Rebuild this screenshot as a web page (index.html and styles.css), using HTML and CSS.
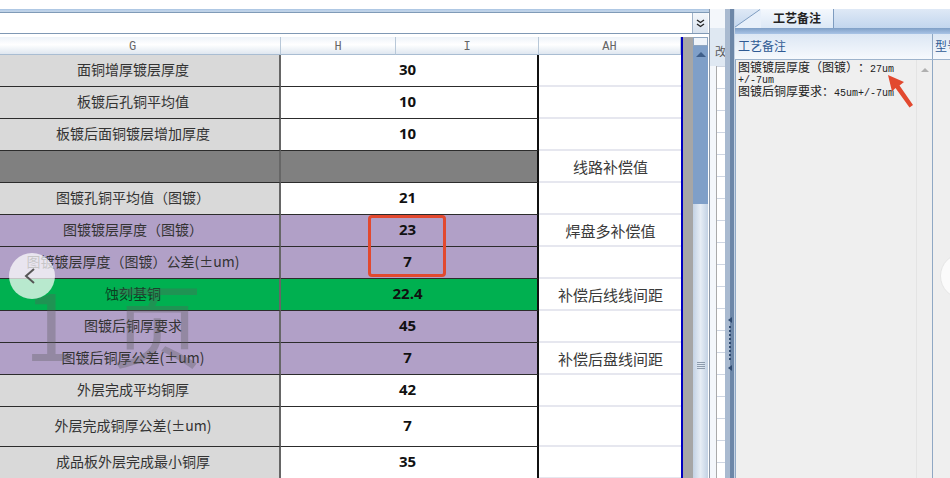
FILE: index.html
```html
<!DOCTYPE html>
<html lang="zh-CN">
<head>
    <meta charset="UTF-8">
    <title>工艺备注</title>
    <link rel="stylesheet" href="styles.css">
</head>
<body>

<div class="app">
    <!-- 左边表格 -->
    <div class="sheet">
        <div class="title-line"></div>
        <div class="formula">
            <div class="formula-input"></div>
            <div class="formula-btn">
                <svg width="9" height="9" viewBox="0 0 9 9"><path d="M1 1l3.5 2.5L8 1M1 5l3.5 2.5L8 5" fill="none" stroke="#222" stroke-width="1.4"/></svg>
            </div>
        </div>
        <div class="sheet-body">
            <div class="table">
                <div class="th">G</div><div class="th">H</div><div class="th">I</div><div class="th">AH</div>

                <div class="td name">面铜增厚镀层厚度</div><div class="td val">30</div><div class="td note"></div>
                <div class="td name">板镀后孔铜平均值</div><div class="td val">10</div><div class="td note"></div>
                <div class="td name">板镀后面铜镀层增加厚度</div><div class="td val">10</div><div class="td note"></div>
                <div class="td name dark"></div><div class="td val dark"></div><div class="td note">线路补偿值</div>
                <div class="td name">图镀孔铜平均值（图镀）</div><div class="td val">21</div><div class="td note"></div>
                <div class="td name purple">图镀镀层厚度（图镀）</div><div class="td val purple">23</div><div class="td note">焊盘多补偿值</div>
                <div class="td name purple">图镀镀层厚度（图镀）公差(±um)</div><div class="td val purple">7</div><div class="td note"></div>
                <div class="td name green">蚀刻基铜</div><div class="td val green">22.4</div><div class="td note">补偿后线线间距</div>
                <div class="td name purple">图镀后铜厚要求</div><div class="td val purple">45</div><div class="td note"></div>
                <div class="td name purple">图镀后铜厚公差(±um)</div><div class="td val purple">7</div><div class="td note">补偿后盘线间距</div>
                <div class="td name">外层完成平均铜厚</div><div class="td val">42</div><div class="td note"></div>
                <div class="td name">外层完成铜厚公差(±um)</div><div class="td val">7</div><div class="td note"></div>
                <div class="td name">成品板外层完成最小铜厚</div><div class="td val">35</div><div class="td note"></div>
            </div>
            <div class="sheet-edge"></div>
            <div class="scrollbar">
                <div class="scroll-split"></div>
                <div class="scroll-track"><span class="scroll-up"></span></div>
                <div class="scroll-thumb"><span class="grip"></span></div>
            </div>
        </div>
    </div>

    <!-- 中间窄列和分隔条 -->
    <div class="narrow">
        <div class="narrow-head">改</div>
        <div class="narrow-rows"></div>
    </div>
    <div class="splitter">
        <span class="split-arrow"></span>
        <span class="split-dots"></span>
        <span class="split-arrow"></span>
    </div>

    <!-- 右边面板 -->
    <div class="panel">
        <div class="tabs">
            <svg class="tab-slant" width="28" height="20" viewBox="0 0 28 20"><path d="M0 20L27 0H28V20Z" fill="#e8f0fa"/><path d="M0 19.500L27 .5" fill="none" stroke="#7e9cc0"/></svg>
            <div class="tab">工艺备注</div>
        </div>
        <div class="panel-band"></div>
        <div class="panel-head">
            <div class="head-main">工艺备注</div>
            <div class="head-next">型号</div>
        </div>
        <div class="panel-body">
            <div class="remark">
                <p>图镀镀层厚度（图镀）：<span class="latin">27um</span></p>
                <p class="latin line-two">+/-7um</p>
                <p>图镀后铜厚要求：<span class="latin">45um+/-7um</span></p>
            </div>
            <div class="remark-scroll"><span class="scroll-up light"></span></div>
            <div class="next-col"></div>
        </div>
    </div>
</div>

<!-- 盖在截图上面的标记 -->
<div class="red-box"></div>
<svg class="red-arrow" width="34" height="36" viewBox="0 0 34 36"><path d="M4 1L20 8L15.500 11.500L29 31L25.500 33.500L11.500 14L8 17.500Z" fill="#e2492f"/></svg>
<div class="watermark">1页</div>
<div class="nav nav-left">
    <svg width="14" height="20" viewBox="0 0 14 20"><path d="M11 3L3 10L11 17" fill="none" stroke="#555" stroke-width="2"/></svg>
</div>
<div class="nav nav-right"></div>

</body>
</html>
```
FILE: styles.css
```css
/* Geral */
html, body {
    margin: 0;
    height: 100%;
    overflow: hidden;
    background: #fff;
}

body {
    font-family: "Noto Sans CJK SC", "Liberation Sans", sans-serif;
    color: #333;
    text-spacing-trim: space-all;
}

.app {
    display: flex;
    height: 469px;
    margin-top: 9px;
    overflow: hidden;
}

/* Tabela */
.sheet {
    width: 710px;
    flex: none;
    border-right: 1px solid #8a97a8;
    box-sizing: border-box;
    overflow: hidden;
}

.title-line {
    height: 4px;
    background: linear-gradient(#a9c4e2, #c6d8ec 60%, #5f7f9f);
}

.formula {
    display: flex;
    height: 20px;
    border-bottom: 1px solid #7f98b4;
}

.formula-input {
    flex: 1;
    background: #fff;
}

.formula-btn {
    width: 15px;
    margin-right: 1px;
    background: linear-gradient(#f4f7fb, #d8e2ee);
    border-left: 1px solid #9fb2c8;
    display: flex;
    align-items: center;
    justify-content: center;
}

.sheet-body {
    display: flex;
    margin-top: 3px;
    margin-left: -15px;
}

.table {
    width: 696px;
    flex: none;
    display: grid;
    grid-template-columns: 296px 115px 143px 142px;
    grid-template-rows: 18px repeat(11, 32px) 40px 32px;
}

.th {
    font-family: "Liberation Mono", monospace;
    font-size: 12px;
    color: #666;
    background: linear-gradient(#eef3f9, #fff 45%, #dfe7f0);
    border-right: 1px solid #b8c8d8;
    border-bottom: 1px solid #a9bdd2;
    box-sizing: border-box;
    display: flex;
    align-items: center;
    justify-content: center;
    padding-top: 3px;
}

.td {
    font-size: 14px;
    box-sizing: border-box;
    display: flex;
    align-items: center;
    justify-content: center;
    border-bottom: 1px solid #2c2c2c;
    padding-bottom: 4px;
}

.name {
    background: #d9d9d9;
    border-right: 2px solid #666;
    padding-left: 2px;
}

.val {
    grid-column: span 2;
    background: #fff;
    font-family: "Open Sans", "Liberation Sans", sans-serif;
    font-weight: 700;
    font-size: 15px;
    color: #111;
    border-right: 2px solid #111;
    padding-right: 3px;
}

.note {
    background: #fff;
    color: #3a3a3a;
    font-size: 15px;
    border-bottom: 2px solid #e6e7ef;
    padding-bottom: 0;
    padding-left: 1px;
}

.dark { background: #808080; }
.purple { background: #b1a0c7; }
.green { background: #00b050; color: #0d3d22; }
.val.green { color: #111; }

.sheet-edge {
    width: 12px;
    flex: none;
    background: #a6a6a6;
    border-left: 2px solid #0000c0;
    box-sizing: border-box;
}

.scrollbar {
    width: 15px;
    flex: none;
    display: flex;
    flex-direction: column;
    background: #d3deea;
}

.scroll-split {
    height: 9px;
    background: #eef3f9;
    border: 1px solid #8ea5c0;
    box-sizing: border-box;
}

.scroll-track {
    height: 158px;
    background: #7f9fc8;
    display: flex;
    justify-content: center;
    padding-top: 6px;
    box-sizing: border-box;
}

.scroll-up {
    width: 0;
    height: 0;
    border: 5px solid transparent;
    border-top: 0;
    border-bottom: 5px solid #3f5f8a;
}

.scroll-up.light {
    border-width: 4px;
    border-top: 0;
    border-bottom: 4px solid #b0b0b0;
}

.scroll-thumb {
    flex: 1;
    height: 322px;
    background: linear-gradient(90deg, #c3d2e4, #e6edf5 50%, #c3d2e4);
}

.grip {
    display: block;
    width: 8px;
    height: 7px;
    margin: 158px auto 0;
    background: repeating-linear-gradient(#8d9cad 0 1px, transparent 1px 2px);
}

/* Coluna estreita e divisor */
.narrow {
    width: 15px;
    flex: none;
    display: flex;
    flex-direction: column;
    padding-top: 19px;
    box-sizing: border-box;
    background: #f4f7fb;
}

.narrow-head {
    height: 38px;
    padding-left: 5px;
    font-size: 11px;
    line-height: 46px;
    color: #555;
    overflow: hidden;
    background: #dfe8f2;
    flex: none;
}

.narrow-rows {
    flex: 1;
    margin-left: 6px;
    background: repeating-linear-gradient(#cfd6e2 0 1px, #fff 1px 22px);
    border-left: 1px solid #aaa;
}

.splitter {
    width: 10px;
    flex: none;
    background: linear-gradient(90deg, #a9bad0 0 50%, #6d87a8 50% 85%, #c6d4e5 85%);
    display: flex;
    flex-direction: column;
    align-items: center;
    gap: 3px;
    padding-top: 308px;
    box-sizing: border-box;
}

.split-arrow {
    width: 0;
    height: 0;
    border: 3px solid transparent;
    border-left: 0;
    border-right: 4px solid #2f4a70;
}

.split-dots {
    width: 2px;
    height: 36px;
    background: repeating-linear-gradient(#2f4a70 0 2px, transparent 2px 4px);
}

/* Painel direito */
.panel {
    flex: 1;
    display: flex;
    flex-direction: column;
    min-width: 0;
}

.tabs {
    display: flex;
    height: 19px;
    background: linear-gradient(#dfe9f6, #c2d6ee);
    flex: none;
    overflow: hidden;
}

.tab-slant {
    flex: none;
    margin-left: -2px;
}

.tab {
    width: 73px;
    font-size: 12px;
    font-weight: 700;
    line-height: 18px;
    text-align: center;
    color: #222;
    background: linear-gradient(#f4f8fd, #dce8f6);
    border-right: 1px solid #7e9cc0;
    box-sizing: border-box;
    flex: none;
}

.panel-band {
    height: 6px;
    background: linear-gradient(#7f9fc6, #a9c4e6);
    flex: none;
}

.panel-head {
    display: flex;
    height: 26px;
    flex: none;
    font-size: 12px;
    color: #2f5a94;
    background: linear-gradient(#dce7f4, #f6f9fd);
    border-bottom: 1px solid #9db3cc;
    box-sizing: border-box;
}

.head-main {
    width: 198px;
    padding-left: 3px;
    line-height: 24px;
    border-right: 1px solid #8fa8c4;
    box-sizing: border-box;
    flex: none;
}

.head-next {
    padding-left: 2px;
    line-height: 24px;
    white-space: nowrap;
}

.panel-body {
    flex: 1;
    display: flex;
    background: #efefef;
    border-left: 1px solid #8fa8c4;
}

.remark {
    width: 180px;
    flex: none;
    padding: 1px 0 0 2px;
    box-sizing: border-box;
    font-size: 12px;
    color: #222;
}

.remark p {
    margin: 0;
    height: 12px;
    line-height: 12px;
    white-space: nowrap;
}

.remark p.line-two {
    position: relative;
    top: 2px;
}

.latin {
    font-family: "Liberation Mono", monospace;
    font-size: 10px;
    line-height: 10px;
}

.remark-scroll {
    width: 17px;
    flex: none;
    padding-top: 8px;
    display: flex;
    justify-content: center;
    align-items: flex-start;
    box-sizing: border-box;
    border-left: 1px solid #e4e4e4;
    border-right: 1px solid #8fa8c4;
}

.next-col {
    flex: 1;
}

/* Marcas por cima */
.red-box {
    position: absolute;
    left: 368px;
    top: 215px;
    width: 78px;
    height: 62px;
    border: 3px solid #e2492f;
    border-radius: 4px;
    box-sizing: border-box;
}

.red-arrow {
    position: absolute;
    left: 884px;
    top: 74px;
}

.watermark {
    position: absolute;
    left: 24px;
    top: 262px;
    font-size: 92px;
    line-height: 118px;
    color: rgba(90, 90, 90, 0.34);
    white-space: nowrap;
    letter-spacing: 36px;
}

.nav {
    position: absolute;
    width: 46px;
    height: 46px;
    border-radius: 50%;
    background: rgba(255, 255, 255, 0.72);
    display: flex;
    align-items: center;
    justify-content: center;
}

.nav-left {
    left: 9px;
    top: 253px;
    padding-right: 4px;
    box-sizing: border-box;
}

.nav-right {
    left: 940px;
    top: 253px;
    border: 1px solid #e6e6e6;
    box-sizing: border-box;
}
```
